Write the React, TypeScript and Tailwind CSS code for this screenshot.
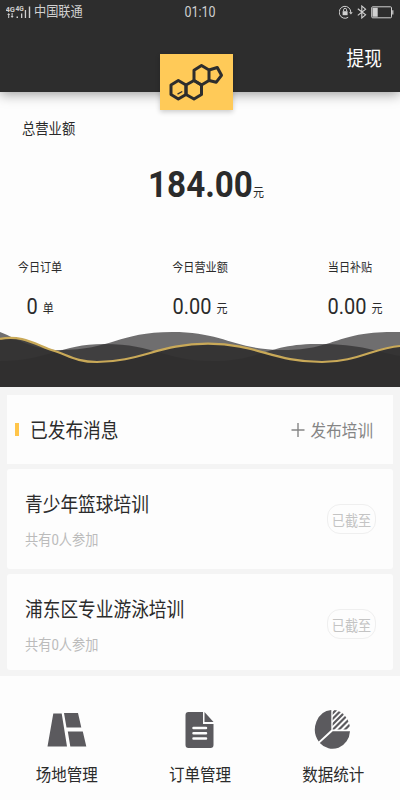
import type { ReactNode } from "react";

interface TextProps {
  children: ReactNode;
  className?: string;
}

interface Stat {
  label: string;
  value: string;
  unit: string;
  className: string;
  valueClassName: string;
}

interface Training {
  title: string;
  joined: number;
  status: string;
  className: string;
}

const stats: Stat[] = [
  { label: "今日订单", value: "0", unit: "单", className: "w-[80px]", valueClassName: "" },
  { label: "今日营业额", value: "0.00", unit: "元", className: "w-[80px] ml-[10px]", valueClassName: "" },
  { label: "当日补贴", value: "0.00", unit: "元", className: "w-[80px]", valueClassName: "pl-[10px]" },
];

const trainings: Training[] = [
  { title: "青少年篮球培训", joined: 0, status: "已截至", className: "h-[100px]" },
  { title: "浦东区专业游泳培训", joined: 0, status: "已截至", className: "h-[96px]" },
];

// Tall, narrow lettering used on the whole screen
function Text({ children, className = "" }: TextProps) {
  return (
    <span className={`inline-block scale-y-[1.125] leading-none whitespace-nowrap ${className}`}>
      {children}
    </span>
  );
}

function StatusBar() {
  return (
    <div className="grid h-6 grid-cols-3 items-center pr-[6px] pl-[6px] text-[#d0d0d0]">
      <div className="flex items-center gap-[3px]">
        <svg width="25" height="13" viewBox="0 0 25 13" fill="currentColor">
          <text x="-.5" y="6" fontSize="7.6" fontWeight="bold" fontFamily="Roboto">4G</text>
          <text x="9.5" y="5.2" fontSize="6.6" fontWeight="bold" fontFamily="Roboto">4G</text>
          <path d="M1.2 9 2.7 7l1.5 2h-1v3h-1V9zM4.6 10 6.1 12l1.5-2h-1V7h-1v3z" />
          <path d="M10.5 10.5h1.5V12h-1.5zM15 7.5h1.3V12H15zM18.8 4h1.3v8h-1.3zM22.8.5h1.4V12h-1.4z" />
        </svg>
        <Text className="text-[12.2px]">中国联通</Text>
      </div>
      <Text className="justify-self-center pt-px text-[12.5px]">01:10</Text>
      <div className="flex items-center justify-end gap-[4px]">
        <svg width="14" height="14" viewBox="0 0 14 14" fill="none" stroke="currentColor">
          <path d="M9.2 12.3A5.8 6 0 1 1 11.8 7.5" />
          <path d="M10 7.2h3.7l-1.8 2.3z" fill="currentColor" stroke="none" />
          <path d="M3.6 6.2h5v4h-5z" fill="currentColor" stroke="none" />
          <path d="M4.6 6.2V4.8a1.5 1.5 0 0 1 3 0v1.4" />
        </svg>
        <svg width="10" height="14" viewBox="0 0 10 14" fill="none" stroke="currentColor" strokeWidth="1.1">
          <path d="M.8 3.7 8.6 9.8 4.8 13V1l3.8 3.2L.8 10.4" />
        </svg>
        <svg width="23" height="13" viewBox="0 0 23 13" fill="none" stroke="currentColor">
          <rect x=".7" y=".8" width="19.8" height="11" rx="1" />
          <path d="M1.5 1.8h5.2v9H1.5zM21.2 4.2h1.2v4.4h-1.2z" fill="currentColor" stroke="none" />
        </svg>
      </div>
    </div>
  );
}

function Logo() {
  return (
    <div className="flex h-[56px] w-[73px] items-center justify-center bg-[#ffca58] shadow-[0_2px_5px_rgba(0,0,0,0.2)]">
      <svg width="73" height="56" viewBox="0 0 73 56" fill="none" stroke="#2d2d2d" strokeWidth="3" strokeLinejoin="round">
        <path d="M18.3 26.5 26 31v9.5L18.3 45 11 40.5V31z" />
        <path d="M34 26.5 41.5 31v9.5L34 45l-8-4.5V31z" />
        <path d="M34 26.5V16.3l7.5-4.8L49 16v10.5L41.5 31z" />
        <path d="m49 16 8.3-2.5 4.2 7.8-5.2 6.9-7.3-1.7" />
        <path d="m17.5 40.2 4.8-2.7" strokeWidth="1.4" />
      </svg>
    </div>
  );
}

function Waves() {
  return (
    <svg className="block w-full" height="57" viewBox="0 0 400 57" fill="none">
      <path
        d="M0 2C20 10 34 20 60 20C112 20 118 2 172 2C224 2 234 20 284 20C334 20 336 2 392 2H400V57H0Z"
        fill="#6f6e6f"
      />
      <path
        d="M0 31C48 31 60 14 104 14C156 14 164 31 212 31C260 31 268 14 316 14C364 14 376 22 400 26V57H0Z"
        fill="#2b2a2b"
        fillOpacity=".68"
      />
      <path
        d="M0 9C22 4 38 16 53 20.5S76 32 97 32C140 32 160 13.7 208 13.7C258 13.7 272 32 322 32C356 32 374 18 400 16V57H0Z"
        fill="#2f2d2e"
        fillOpacity=".9"
      />
      <path
        d="M0 9C22 4 38 16 53 20.5S76 32 97 32C140 32 160 13.7 208 13.7C258 13.7 272 32 322 32C356 32 374 18 400 16"
        stroke="#c9a958"
        strokeWidth="2.2"
      />
    </svg>
  );
}

function FieldIcon() {
  return (
    <svg width="40" height="40" viewBox="0 0 40 40" fill="#5b5a5e">
      <path d="M6.3 4.5h8.4L20 37.500H.5zM17 4h14l3.300 14.500H19.5zM20.8 22.500h15l3.500 15h-16z" />
    </svg>
  );
}

function OrderIcon() {
  return (
    <svg width="30" height="40" viewBox="0 0 30 40">
      <path d="M3.5 3H18v12h10.500v21a3 3 0 0 1-3 3h-22a3 3 0 0 1-3-3V6a3 3 0 0 1 3-3z" fill="#5b5a5e" />
      <path d="M19.5 3 28.500 13h-9z" fill="#5b5a5e" />
      <path d="M8.500 19H21M8.500 24.200H21M8.500 29.400H21" stroke="#fdfdfd" strokeWidth="2.5" strokeLinecap="round" />
    </svg>
  );
}

function ChartIcon() {
  return (
    <svg width="38" height="40" viewBox="0 0 38 40">
      <defs>
        <clipPath id="slice">
          <path d="M18.7 20.5V1A17.3 19.5 0 0 1 36 20.5z" />
        </clipPath>
      </defs>
      <path d="M17.3 1v19.8L4.7 32.5A17.5 19.5 0 0 1 17.3 1z" fill="#5b5a5e" />
      <path d="M18.7 22.3H36A17.5 18.5 0 0 1 5.800 34z" fill="#5b5a5e" />
      <g clipPath="url(#slice)" stroke="#5b5a5e" strokeWidth="2.2">
        <path d="M16 7 26-3M16 12.5 32-3.5M16 18 36-2M18 21.5 40-.5M24 21.5 42 3.5M30 21.5 42 9.5" />
      </g>
    </svg>
  );
}

const navItems = [
  { label: "场地管理", icon: <FieldIcon /> },
  { label: "订单管理", icon: <OrderIcon /> },
  { label: "数据统计", icon: <ChartIcon /> },
];

export default function App() {
  return (
    <div className="flex h-[800px] w-[400px] flex-col overflow-hidden bg-[#f4f4f4] font-[Roboto,'Noto_Sans_CJK_SC',sans-serif] text-[#2b2b2b]">
      <header className="relative z-10 h-[92px] shrink-0 bg-[#2d2d2d] shadow-[0_2px_12px_rgba(0,0,0,0.4)]">
        <StatusBar />
        <div className="flex justify-end pt-[27px] pr-[18px]">
          <Text className="text-[17.7px] text-white">提现</Text>
        </div>
        <div className="absolute top-[54px] left-[160px]">
          <Logo />
        </div>
      </header>

      {/* Turnover summary */}
      <section className="flex h-[295px] shrink-0 flex-col bg-[#fdfdfd]">
        <div className="flex pt-[30px] pl-[22px]">
          <Text className="text-[13.3px]">总营业额</Text>
        </div>
        <div className="flex items-baseline justify-center pt-[33px] pl-[12px]">
          <Text className="text-[33.2px] font-bold">184.00</Text>
          <Text className="pt-[2px] text-[11px]">元</Text>
        </div>
        <div className="flex justify-between pt-[61px] pr-[10px]">
          {stats.map((stat) => (
            <div key={stat.label} className={`flex flex-col items-center gap-[22px] ${stat.className}`}>
              <Text className="text-[11.1px]">{stat.label}</Text>
              <div className={`flex items-baseline gap-[5px] ${stat.valueClassName}`}>
                <Text className="text-[20px]">{stat.value}</Text>
                <Text className="text-[11px]">{stat.unit}</Text>
              </div>
            </div>
          ))}
        </div>
        <div className="mt-auto">
          <Waves />
        </div>
      </section>

      {/* Published trainings */}
      <main className="flex flex-col gap-[5px] px-[7px] pt-[8px] pb-[6px]">
        <div className="flex h-[69px] items-center bg-[#fdfdfd] pr-[20px] pl-[8px]">
          <span className="h-[13px] w-[4px] bg-[#ffc54a]" />
          <Text className="ml-[11px] pt-[4px] text-[17.7px]">已发布消息</Text>
          <button type="button" className="ml-auto flex items-center gap-[6px] text-[#858585]">
            <svg width="14" height="16" viewBox="0 0 14 16" stroke="currentColor" strokeWidth="1.4">
              <path d="M7 1v14M.5 8h13" />
            </svg>
            <Text className="pt-[4px] text-[15.6px]">发布培训</Text>
          </button>
        </div>
        {trainings.map((item) => (
          <div
            key={item.title}
            className={`flex items-start justify-between rounded-[3px] bg-[#fdfdfd] pr-[17px] pl-[18px] ${item.className}`}
          >
            <div className="flex flex-col items-start gap-[18px] pt-[28px]">
              <Text className="text-[17.7px]">{item.title}</Text>
              <Text className="text-[13.2px] text-[#bbbbbb]">共有{item.joined}人参加</Text>
            </div>
            <div className="mt-[35px] flex h-[30px] w-[49px] items-center justify-center rounded-[13px] border border-[#efefef] text-[#c4c4c4]">
              <Text className="pt-[3px] text-[13.1px]">{item.status}</Text>
            </div>
          </div>
        ))}
      </main>

      <nav className="grid flex-1 grid-cols-3 bg-[#fdfdfd] pt-[33px]">
        {navItems.map((item) => (
          <button key={item.label} type="button" className="flex flex-col items-center gap-[19px] self-start">
            {item.icon}
            <Text className="text-[15.5px]">{item.label}</Text>
          </button>
        ))}
      </nav>
    </div>
  );
}
